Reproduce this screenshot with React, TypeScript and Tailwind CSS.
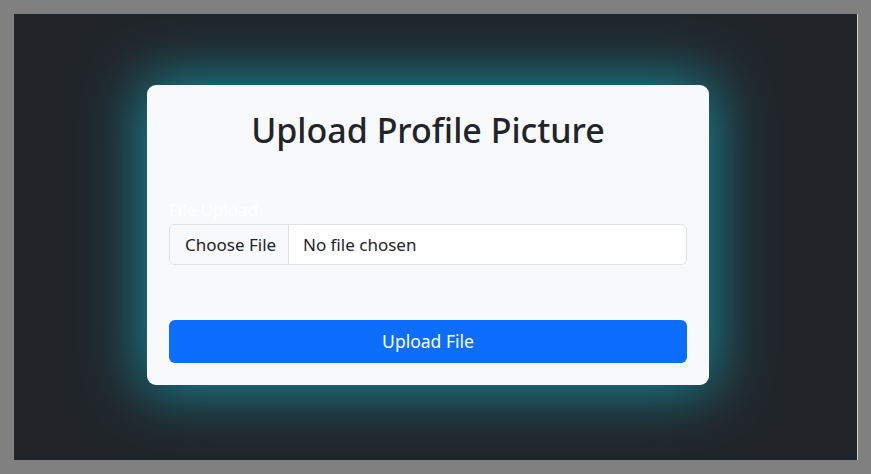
export default function App() {
  return (
    <div className="w-[871px] h-[474px] bg-[#808080] pl-[14px] pt-[14px] font-['Noto_Sans',sans-serif]">
      <div className="w-[844px] h-[446px] bg-[#212529] border-r border-[#d4d4d4] pt-[71px] pl-[133px]">
        {/* Card */}
        <div className="w-[562px] h-[300px] rounded-[9px] bg-[#f8f9fa] px-[22px] pt-[24px] shadow-[0_0_60px_6px_rgba(23,162,184,0.8)]">
          <h2 className="h-[43px] text-center text-[34px] leading-[43px] font-medium text-[#212529]">
            Upload Profile Picture
          </h2>

          <label className="block mt-[44px] h-[28px] text-[17px] leading-[28px] text-white">File Upload</label>

          <div className="flex h-[41px] rounded-[6px] border border-[#dee2e6] bg-white overflow-hidden text-[17px] text-[#212529]">
            <div className="w-[119px] shrink-0 flex items-center pl-[15px] bg-[#f8f9fa] border-r border-[#dee2e6]">
              Choose File
            </div>
            <div className="flex items-center pl-[14px]">No file chosen</div>
          </div>

          <button
            type="button"
            className="mt-[55px] block w-full h-[43px] rounded-[6px] bg-[#0d6efd] text-white text-[17.5px]"
          >
            Upload File
          </button>
        </div>
      </div>
    </div>
  )
}
